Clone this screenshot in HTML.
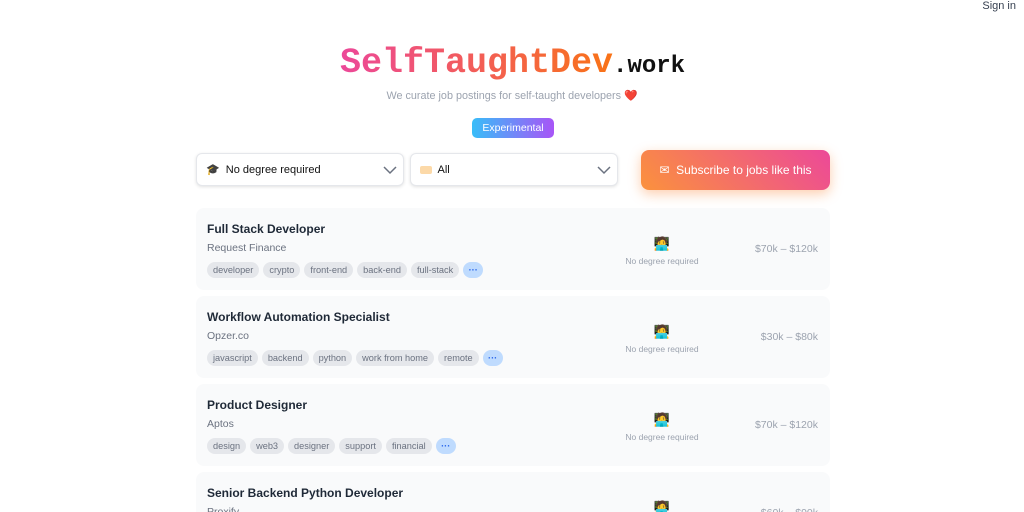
<!DOCTYPE html>
<html><head><meta charset="utf-8"><style>
*{box-sizing:border-box;margin:0;padding:0}
html,body{width:1024px;height:512px;overflow:hidden}
body{background:#fff;font-family:"Liberation Sans",sans-serif;position:relative}
.signin{position:absolute;right:8px;top:0;font-size:11px;color:#374151}
.logo{position:absolute;left:340px;top:43px;white-space:nowrap;font-family:"Liberation Mono",monospace;font-weight:bold}
.logo .a{font-size:35px;background:linear-gradient(90deg,#ec4899,#f97316);-webkit-background-clip:text;color:transparent}
.logo .b{font-size:24px;color:#111}
.tag{position:absolute;left:0;width:1024px;top:89px;text-align:center;font-size:10.8px;color:#9ca3af}
.exp{position:absolute;left:472px;top:118px;width:82px;height:20px;border-radius:5px;background:linear-gradient(90deg,#38bdf8,#a855f7);color:#fff;font-size:10.5px;text-align:center;line-height:20px}
.sel{position:absolute;top:153px;height:33px;background:#fff;border:1px solid #e5e7eb;border-radius:6px;box-shadow:0 1px 3px rgba(0,0,0,.12);font-size:11px;color:#111;line-height:33px;padding-left:9px}
.sel svg{position:absolute;right:6px;top:11px}
.sub{position:absolute;left:641px;top:150px;width:189px;height:40px;border-radius:8px;background:linear-gradient(45deg,#fb923c,#ec4899);box-shadow:0 4px 12px rgba(249,115,22,.35);color:#fff;font-size:12px;line-height:40px;text-align:center}
.card{position:absolute;left:196px;width:634px;height:82px;background:#f9fafb;border-radius:8px}
.t{position:absolute;left:11px;top:14px;font-size:12px;font-weight:bold;color:#1f2937}
.c{position:absolute;left:11px;top:34px;font-size:10.5px;color:#6b7280}
.tags{position:absolute;left:11px;top:54px;display:flex;gap:4px}
.tags span{background:#e5e7eb;color:#6b7280;font-size:9.2px;height:16px;line-height:16px;padding:0 6px;border-radius:8px}
.tags span.m{background:#bfdbfe;color:#2563eb;font-weight:bold;width:20px;padding:0;text-align:center}
.nd{position:absolute;left:410px;width:112px;text-align:center;top:28px;font-size:8.5px;color:#9ca3af}
.nd i{display:block;font-style:normal;font-size:13px;margin-bottom:4px}
.sal{position:absolute;right:12px;top:35px;font-size:10.5px;color:#9ca3af}
</style></head><body>
<div class="signin">Sign in</div>
<div class="logo"><span class="a">SelfTaughtDev</span><span class="b">.work</span></div>
<div class="tag">We curate job postings for self-taught developers <span style="color:#dc2626">❤️</span></div>
<div class="exp">Experimental</div>
<div class="sel" style="left:196px;width:208px">🎓&nbsp; No degree required<svg width="14" height="10" viewBox="0 0 14 10"><path d="M1 2l6 6 6-6" stroke="#6b7280" stroke-width="1.5" fill="none"/></svg></div>
<div class="sel" style="left:410px;width:208px"><span style="display:inline-block;width:12px;height:8px;background:#fcd9a8;border-radius:2px;vertical-align:-1px"></span>&nbsp; All<svg width="14" height="10" viewBox="0 0 14 10"><path d="M1 2l6 6 6-6" stroke="#6b7280" stroke-width="1.5" fill="none"/></svg></div>
<div class="sub">✉&nbsp; Subscribe to jobs like this</div>

<div class="card" style="top:208px"><div class="t">Full Stack Developer</div><div class="c">Request Finance</div>
<div class="tags"><span>developer</span><span>crypto</span><span>front-end</span><span>back-end</span><span>full-stack</span><span class="m">···</span></div>
<div class="nd"><i>🧑‍💻</i>No degree required</div><div class="sal">$70k – $120k</div></div>

<div class="card" style="top:296px"><div class="t">Workflow Automation Specialist</div><div class="c">Opzer.co</div>
<div class="tags"><span>javascript</span><span>backend</span><span>python</span><span>work from home</span><span>remote</span><span class="m">···</span></div>
<div class="nd"><i>🧑‍💻</i>No degree required</div><div class="sal">$30k – $80k</div></div>

<div class="card" style="top:384px"><div class="t">Product Designer</div><div class="c">Aptos</div>
<div class="tags"><span>design</span><span>web3</span><span>designer</span><span>support</span><span>financial</span><span class="m">···</span></div>
<div class="nd"><i>🧑‍💻</i>No degree required</div><div class="sal">$70k – $120k</div></div>

<div class="card" style="top:472px"><div class="t">Senior Backend Python Developer</div><div class="c">Proxify</div>
<div class="nd"><i>🧑‍💻</i>No degree required</div><div class="sal">$60k – $90k</div></div>
</body></html>
